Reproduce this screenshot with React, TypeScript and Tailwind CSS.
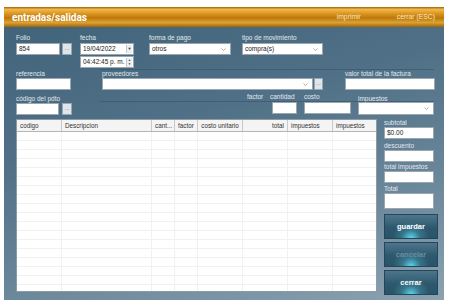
import React from "react"

const lbl = "block h-[8px] leading-[8px] text-[6.5px] text-[#e2e9ee] whitespace-nowrap"
const box = "h-[12px] bg-white border border-[#9aa7b0] text-[6.5px] leading-[10px] text-[#222] px-[2px] whitespace-nowrap overflow-hidden"
const dots = "h-[12px] bg-[#dfe5e9] border border-[#9aa7b0] text-[6px] leading-[8px] text-[#777] text-center"

function Chevron() {
  return (
    <svg width="5" height="3" viewBox="0 0 5 3" className="shrink-0">
      <path d="M0.5 0.5 L2.5 2.5 L4.5 0.5" stroke="#8a8a8a" fill="none" strokeWidth="0.7" />
    </svg>
  )
}

function Select({ w, value }: { w: string; value?: string }) {
  return (
    <div className={`${box} ${w} flex items-center justify-between pr-[4px]`}>
      <span>{value}</span>
      <Chevron />
    </div>
  )
}

const cols = [
  { name: "codigo", w: "w-[45px]", align: "text-left" },
  { name: "Descripcion", w: "w-[90px]", align: "text-left" },
  { name: "cant...", w: "w-[23px]", align: "text-left" },
  { name: "factor", w: "w-[23px]", align: "text-left" },
  { name: "costo unitario", w: "w-[45px]", align: "text-center" },
  { name: "total", w: "w-[45px]", align: "text-right" },
  { name: "impuestos", w: "w-[45px]", align: "text-left" },
  { name: "impuestos", w: "w-[45px]", align: "text-left" },
]

function Btn({ text, dim }: { text: string; dim?: boolean }) {
  return (
    <div
      className={`h-[25px] w-[54px] border border-[#24465a] bg-[radial-gradient(ellipse_at_50%_100%,#5ad6ef_0%,rgba(90,214,239,0.25)_25%,transparent_50%),linear-gradient(to_bottom,#4d768c,#2e586e_55%,#2a5468)] flex items-center justify-center text-[7.5px] font-bold ${dim ? "text-[#6d8c9c]" : "text-white"}`}
    >
      {text}
    </div>
  )
}

export default function App() {
  return (
    <div className="w-[453px] h-[308px] bg-white pt-[7px] pl-[4px] font-['Liberation_Sans',Arial,sans-serif]">
      <div className="w-[440px] h-[293px] flex flex-col overflow-hidden">
        {/* title bar */}
        <div className="h-[20px] shrink-0 flex items-center bg-[linear-gradient(to_bottom,#9c6410_0%,#f2b846_12%,#d8921f_35%,#bc780a_55%,#dca234_78%,#a06408_100%)] pl-[8px] pr-[9px]">
          <span className="text-white font-bold text-[10px] font-['Roboto',sans-serif]">entradas/salidas</span>
          <span className="ml-auto text-[6.8px] text-[#fbe6c0]">imprimir</span>
          <span className="ml-[36px] text-[6.8px] text-[#fbe6c0]">cerrar (ESC)</span>
        </div>

        {/* body */}
        <div className="flex-1 bg-[linear-gradient(165deg,#42647a_0%,#4f7086_35%,#6c889b_70%,#8ba2b1_100%)] pl-[12px] pt-[7px]">
          {/* row 1 */}
          <div className="flex items-start">
            <div className="w-[44px]">
              <span className={lbl}>Folio</span>
              <div className={`${box} mt-[1px]`}>854</div>
            </div>
            <div className={`${dots} w-[10px] ml-[2px] mt-[9px]`}>...</div>
            <div className="w-[54px] ml-[8px]">
              <span className={lbl}>fecha</span>
              <div className={`${box} mt-[1px] flex items-center justify-between pr-[1px] border-[#6f7a82]`}>
                <span>19/04/2022</span>
                <span className="w-[6px] h-[8px] bg-[#eceff1] border-l border-[#c0c6ca] flex items-center justify-center text-[4px] text-[#333]">▼</span>
              </div>
              <div className={`${box} mt-[1px] flex items-center justify-between pr-[1px]`}>
                <span>04:42:45 p. m.</span>
                <span className="w-[6px] h-[9px] bg-[#eceff1] border-l border-[#c0c6ca] flex flex-col items-center justify-center text-[3px] leading-[4px] text-[#333]">
                  <span>▲</span>
                  <span>▼</span>
                </span>
              </div>
            </div>
            <div className="w-[82px] ml-[15px]">
              <span className={lbl}>forma de pago</span>
              <Select w="w-[82px] mt-[1px]" value="otros" />
            </div>
            <div className="w-[81px] ml-[11px]">
              <span className={lbl}>tipo de movimiento</span>
              <Select w="w-[81px] mt-[1px]" value="compra(s)" />
            </div>
          </div>

          <div className="ml-[84px] mr-[10px] h-px bg-[#34536a]/60 mt-[1px]" />

          {/* row 2 */}
          <div className="flex items-start">
            <div className="w-[55px]">
              <span className={lbl}>referencia</span>
              <div className={box} />
            </div>
            <div className="w-[211px] ml-[31px]">
              <span className={lbl}>proveedores</span>
              <Select w="w-[211px]" />
            </div>
            <div className={`${dots} w-[9px] ml-[1px] mt-[8px]`}>...</div>
            <div className="w-[90px] ml-[22px]">
              <span className={lbl}>valor total de la factura</span>
              <div className={box} />
            </div>
          </div>

          {/* row 3 */}
          <div className="relative flex items-start mt-[4px]">
            <div className="absolute left-[84px] right-[10px] top-[7px] h-px bg-[#34536a]/60" />
            <div className="w-[43px] mt-[1px]">
              <span className={lbl}>código del pdto</span>
              <div className={`${box} h-[11px]`} />
            </div>
            <div className={`${dots} w-[10px] ml-[3px] mt-[9px]`}>...</div>
            <div className="w-[23px] ml-[175px] -mt-[1px]">
              <span className={lbl}>factor</span>
            </div>
            <div className="w-[27px] -mt-[1px]">
              <span className={lbl}>cantidad</span>
              <div className={`${box} ml-[2px] mt-[1px]`} />
            </div>
            <div className="w-[47px] ml-[7px] -mt-[1px]">
              <span className={lbl}>costo</span>
              <div className={`${box} mt-[1px]`} />
            </div>
            <div className="w-[76px] ml-[7px] mt-[1px]">
              <span className={lbl}>impuestos</span>
              <Select w="w-[76px] h-[13px] -mt-[1px]" />
            </div>
          </div>

          {/* main */}
          <div className="flex items-start mt-[4px]">
            <div className="w-[361px] h-[173px] bg-white border border-[#8f9ba3] overflow-hidden">
              <div className="flex h-[12px] bg-[#f4f4f4] border-b border-[#b5b5b5]">
                {cols.map((c, i) => (
                  <div
                    key={i}
                    className={`${c.w} ${c.align} shrink-0 border-r border-[#c9c9c9] text-[6.3px] leading-[11px] text-[#333] px-[3px] whitespace-nowrap overflow-hidden`}
                  >
                    {c.name}
                  </div>
                ))}
              </div>
              {Array.from({ length: 18 }).map((_, r) => (
                <div key={r} className="flex h-[9px] border-b border-[#f1f1f1]">
                  {cols.map((c, i) => (
                    <div key={i} className={`${c.w} shrink-0 border-r border-[#f1f1f1]`} />
                  ))}
                </div>
              ))}
            </div>

            <div className="w-[54px] ml-[7px] flex flex-col">
              <span className={lbl}>subtotal</span>
              <div className={`${box} w-[50px]`}>$0.00</div>
              <span className={`${lbl} mt-[3px]`}>descuento</span>
              <div className={`${box} w-[50px]`} />
              <span className={`${lbl} mt-[1px]`}>total impuestos</span>
              <div className={`${box} w-[50px]`} />
              <span className={`${lbl} mt-[2px]`}>Total</span>
              <div className={`${box} w-[50px] h-[16px]`} />
              <div className="mt-[5px] flex flex-col gap-[3px]">
                <Btn text="guardar" />
                <Btn text="cancelar" dim />
                <Btn text="cerrar" />
              </div>
            </div>
          </div>
        </div>
      </div>
    </div>
  )
}
